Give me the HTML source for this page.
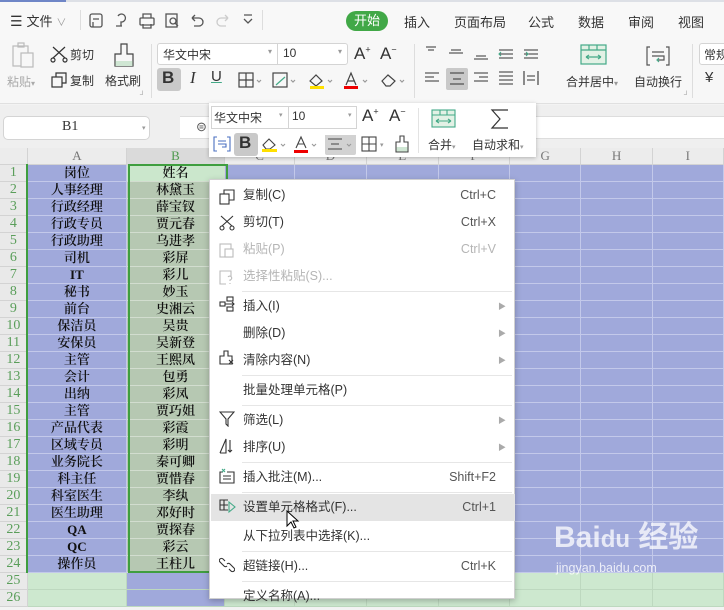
<!DOCTYPE html>
<html><head><meta charset="utf-8">
<style>
*{margin:0;padding:0;box-sizing:border-box}
body{width:724px;height:593px;overflow:hidden;position:relative;background:#f3f3f3;font-family:"Liberation Sans","Noto Sans CJK SC",sans-serif;font-size:12px;color:#333}
.a{position:absolute;white-space:nowrap}
.tab{position:absolute;top:12px;font-size:13px;color:#333}
.ic{position:absolute}
table{position:absolute;left:0;top:148px;border-collapse:separate;border-spacing:0;table-layout:fixed;font-family:"Liberation Serif","Noto Serif CJK SC",serif;font-size:13px}
td{padding:0;height:17px;border-right:1px solid #c3c9ea;border-bottom:1px solid #c3c9ea;background:#a0a9db;text-align:center;color:#111;line-height:16px;font-weight:600;overflow:hidden}
td.h{background:#e9e9e9;border-color:#d3d3d3;color:#5a9e5a;font-weight:normal;font-size:14px}
tr.hd td{height:16px;background:#ececec;border-color:#d3d3d3;color:#777;font-weight:normal;font-size:13px}
tr.hd td.sb{background:#dadada;color:#4e9a4e}
td.b{background:#b6c8b2;border-color:#d2ddcf}
td.b1{background:#cbe7cc}
tr.g td{background:#cde8cf;border-color:#bdd8bf}
tr.g td.h{background:#e9e9e9;border-color:#d3d3d3}
tr.g td.bb{background:#a0a9db}
.menu{position:absolute;left:209px;top:179px;width:306px;height:420px;background:#fff;border:1px solid #d0d0d0;box-shadow:0 2px 6px rgba(0,0,0,.25);font-size:12.5px}
.mi{position:absolute;left:0;width:304px;height:27px;line-height:27px}
.mi .t{position:absolute;left:33px;color:#333}
.mi .k{position:absolute;right:18px;color:#555}
.mi .r{position:absolute;right:8px;color:#aaa;font-size:8px}
.mi.dis .t,.mi.dis .k{color:#b5b5b5}
.sep{position:absolute;left:32px;width:270px;height:1px;background:#e6e6e6}
.box{position:absolute;background:#fff;border:1px solid #d4d4d4;border-radius:3px}
</style></head><body>
<div class="a" style="left:0;top:0;width:724px;height:2px;background:#dde0e6"></div>
<div class="a" style="left:0;top:0;width:66px;height:2px;background:#6f86c7"></div>
<div class="a" style="left:0;top:2px;width:724px;height:38px;background:#f8f8f8"></div>
<div class="a" style="left:10px;top:11px;font-size:14px">☰ <span style="font-size:13px">文件</span> <span style="color:#999;font-size:10px">∨</span></div>
<div class="a" style="left:80px;top:10px;width:1px;height:20px;background:#ddd"></div>
<svg class="ic" style="left:88px;top:12px" width="170" height="18" viewBox="0 0 170 18" fill="none" stroke="#555" stroke-width="1.3">
<rect x="2" y="2" width="12" height="13" rx="2"/><path d="M5 7h6M5 10v5"/>
<path d="M30 4a4 4 0 1 1 3 6v4M28 14h6"/>
<rect x="52" y="6" width="14" height="7" rx="1"/><path d="M55 6V2h8v4M55 12v4h8v-4"/>
<rect x="78" y="2" width="11" height="13"/><circle cx="85" cy="9" r="3"/><path d="M87 11l3 3"/>
<path d="M104 6h7a4 4 0 0 1 0 8h-5M104 6l3-3M104 6l3 3"/>
<path d="M140 6h-7a4 4 0 0 0 0 8h5M140 6l-3-3M140 6l-3 3" stroke="#ccc"/>
<path d="M156 7l4 4 4-4M156 3h8"/>
</svg>
<div class="a" style="left:262px;top:10px;width:1px;height:20px;background:#ddd"></div>
<div class="a" style="left:346px;top:11px;width:42px;height:20px;border-radius:10px;background:#41a847;color:#fff;font-size:13px;text-align:center;line-height:20px">开始</div>
<div class="tab" style="left:404px">插入</div>
<div class="tab" style="left:454px">页面布局</div>
<div class="tab" style="left:528px">公式</div>
<div class="tab" style="left:578px">数据</div>
<div class="tab" style="left:628px">审阅</div>
<div class="tab" style="left:678px">视图</div>
<div class="a" style="left:0;top:40px;width:724px;height:64px;background:#f7f7f7;border-bottom:1px solid #e0e0e0"></div>
<svg class="ic" style="left:10px;top:42px" width="26" height="28" viewBox="0 0 26 28" fill="none" stroke="#bbb" stroke-width="1.2"><rect x="3" y="4" width="15" height="20"/><rect x="8" y="1" width="6" height="4"/><rect x="11" y="11" width="12" height="14" fill="#f7f7f7"/></svg>
<div class="a" style="left:7px;top:73px;color:#aaa">粘贴<span style="font-size:8px">▾</span></div>
<svg class="ic" style="left:50px;top:45px" width="18" height="18" viewBox="0 0 18 18" fill="none" stroke="#333" stroke-width="1.2"><path d="M3 2l12 11M15 2L3 13"/><circle cx="3" cy="15" r="2"/><circle cx="15" cy="15" r="2"/></svg>
<div class="a" style="left:70px;top:46px">剪切</div>
<svg class="ic" style="left:50px;top:71px" width="18" height="18" viewBox="0 0 18 18" fill="none" stroke="#333" stroke-width="1.2"><rect x="2" y="6" width="10" height="10"/><path d="M6 6V2h10v10h-4"/></svg>
<div class="a" style="left:70px;top:72px">复制</div>
<svg class="ic" style="left:112px;top:42px" width="24" height="28" viewBox="0 0 24 28" fill="none" stroke="#444" stroke-width="1.2"><path d="M9 2h6v10h6v12H3V12h6z"/><rect x="3.5" y="19" width="17" height="5" fill="#cfe6d3" stroke="none"/></svg>
<div class="a" style="left:105px;top:72px">格式刷</div>
<div class="a" style="left:151px;top:44px;width:1px;height:54px;background:#ddd"></div>
<div class="box" style="left:157px;top:43px;width:121px;height:22px;border-radius:3px 0 0 3px"></div>
<div class="a" style="left:163px;top:46px">华文中宋</div><div class="a" style="left:268px;top:47px;color:#999;font-size:8px">▾</div>
<div class="box" style="left:277px;top:43px;width:71px;height:22px;border-radius:0 3px 3px 0"></div>
<div class="a" style="left:283px;top:46px">10</div><div class="a" style="left:338px;top:47px;color:#999;font-size:8px">▾</div>
<div class="a" style="left:354px;top:44px;font-size:17px">A<sup style="font-size:9px">+</sup></div>
<div class="a" style="left:380px;top:44px;font-size:17px">A<sup style="font-size:9px">−</sup></div>
<div class="a" style="left:157px;top:68px;width:24px;height:23px;background:#c9c9c9;border-radius:3px"></div>
<div class="a" style="left:162px;top:68px;font-size:17px;font-weight:bold">B</div>
<div class="a" style="left:190px;top:68px;font-size:17px;font-style:italic;font-family:'Liberation Serif',serif">I</div>
<div class="a" style="left:211px;top:68px;font-size:15px;text-decoration:underline;text-decoration-color:#4a8">U</div>
<svg class="ic" style="left:238px;top:71px" width="180" height="20" viewBox="0 0 180 20" fill="none" stroke="#444" stroke-width="1.2">
<rect x="1" y="2" width="14" height="14"/><path d="M8 2v14M1 9h14"/><path d="M19 9l2 2 2-2" stroke="#999"/>
<rect x="35" y="2" width="14" height="14"/><path d="M38 14l9-8" stroke="#4a8"/><path d="M53 9l2 2 2-2" stroke="#999"/>
<path d="M72 10l6-6 6 6-6 5z"/><rect x="72" y="15" width="14" height="3" fill="#ffe000" stroke="none"/><path d="M90 9l2 2 2-2" stroke="#999"/>
<path d="M108 14l5-12 5 12M110 10h6"/><rect x="106" y="15" width="14" height="3" fill="#e00" stroke="none"/><path d="M125 9l2 2 2-2" stroke="#999"/>
<path d="M144 10l6-6 7 6-5 5h-4z"/><path d="M162 9l2 2 2-2" stroke="#999"/>
</svg>
<div class="a" style="left:414px;top:44px;width:1px;height:54px;background:#ddd"></div>
<svg class="ic" style="left:424px;top:44px" width="125" height="48" viewBox="0 0 125 48" fill="none" stroke="#333" stroke-width="1.1">
<path d="M2 3h10M4 6h6"/><path d="M27 6h10M25 9h14"/><path d="M52 12h10M50 15h14"/>
<path d="M75 6h14M75 10h14M75 14h14M78 10h-3"/><path d="M77 8l-2 2 2 2" stroke="#4a8"/>
<path d="M100 6h14M100 10h14M100 14h14"/><path d="M102 8l2 2-2 2" stroke="#4a8"/>
<path d="M1 29h14M1 33h9M1 37h14"/>
<rect x="22" y="24" width="22" height="22" rx="2" fill="#c9c9c9" stroke="none"/><path d="M26 29h14M29 35h8M26 40h14"/>
<path d="M50 29h14M55 33h9M50 37h14"/><path d="M75 28h14M75 32h14M75 36h14M75 40h14"/>
<path d="M100 27v14M114 27v14M103 32h8M103 36h8"/>
</svg>
<svg class="ic" style="left:580px;top:44px" width="28" height="22" viewBox="0 0 28 22" fill="none" stroke="#4a8" stroke-width="1.2"><rect x="1" y="1" width="25" height="19" fill="#e2f1e5"/><path d="M1 6h25M9 1v5M17 1v5"/><path d="M6 13h15M6 13l3-2M6 13l3 2M21 13l-3-2M21 13l-3 2"/></svg>
<div class="a" style="left:566px;top:73px">合并居中<span style="font-size:8px;color:#999">▾</span></div>
<svg class="ic" style="left:646px;top:45px" width="24" height="22" viewBox="0 0 24 22" fill="none" stroke="#555" stroke-width="1.2"><path d="M4 2H1v18h3M20 2h3v18h-3M6 7h12M6 11h12v4h-6" /><path d="M13 13l-2 2 2 2" stroke="#4a8"/></svg>
<div class="a" style="left:634px;top:73px">自动换行</div>
<div class="a" style="left:692px;top:44px;width:1px;height:54px;background:#ddd"></div>
<div class="box" style="left:699px;top:43px;width:40px;height:22px"></div>
<div class="a" style="left:704px;top:46px">常规</div>
<div class="a" style="left:705px;top:69px;font-size:15px">¥</div>
<div class="a" style="left:140px;top:92px;font-size:7px;color:#999">┘</div>
<div class="a" style="left:684px;top:92px;font-size:7px;color:#999">┘</div>
<div class="a" style="left:0;top:105px;width:724px;height:43px;background:#efefef"></div>
<div class="a" style="left:180px;top:116px;width:544px;height:23px;background:#fff;border-top:1px solid #ddd;border-bottom:1px solid #ddd"></div>
<div class="box" style="left:3px;top:116px;width:147px;height:24px;border-radius:5px"></div>
<div class="a" style="left:62px;top:119px;font-family:'Liberation Serif',serif;font-size:14px">B1</div>
<div class="a" style="left:142px;top:124px;color:#999;font-size:7px">▾</div>
<div class="a" style="left:196px;top:119px;font-size:13px;color:#555">⊜</div>
<table>
<colgroup><col style="width:28px"><col style="width:100px"><col style="width:99px"><col style="width:71px"><col style="width:72px"><col style="width:73px"><col style="width:72px"><col style="width:72px"><col style="width:72px"><col style="width:72px"></colgroup>
<tr class="hd"><td></td><td>A</td><td class="sb">B</td><td>C</td><td>D</td><td>E</td><td>F</td><td>G</td><td>H</td><td>I</td></tr>
<tr><td class="h">1</td><td>岗位</td><td class="b b1">姓名</td><td></td><td></td><td></td><td></td><td></td><td></td><td></td></tr>
<tr><td class="h">2</td><td>人事经理</td><td class="b">林黛玉</td><td></td><td></td><td></td><td></td><td></td><td></td><td></td></tr>
<tr><td class="h">3</td><td>行政经理</td><td class="b">薛宝钗</td><td></td><td></td><td></td><td></td><td></td><td></td><td></td></tr>
<tr><td class="h">4</td><td>行政专员</td><td class="b">贾元春</td><td></td><td></td><td></td><td></td><td></td><td></td><td></td></tr>
<tr><td class="h">5</td><td>行政助理</td><td class="b">乌进孝</td><td></td><td></td><td></td><td></td><td></td><td></td><td></td></tr>
<tr><td class="h">6</td><td>司机</td><td class="b">彩屏</td><td></td><td></td><td></td><td></td><td></td><td></td><td></td></tr>
<tr><td class="h">7</td><td>IT</td><td class="b">彩儿</td><td></td><td></td><td></td><td></td><td></td><td></td><td></td></tr>
<tr><td class="h">8</td><td>秘书</td><td class="b">妙玉</td><td></td><td></td><td></td><td></td><td></td><td></td><td></td></tr>
<tr><td class="h">9</td><td>前台</td><td class="b">史湘云</td><td></td><td></td><td></td><td></td><td></td><td></td><td></td></tr>
<tr><td class="h">10</td><td>保洁员</td><td class="b">吴贵</td><td></td><td></td><td></td><td></td><td></td><td></td><td></td></tr>
<tr><td class="h">11</td><td>安保员</td><td class="b">吴新登</td><td></td><td></td><td></td><td></td><td></td><td></td><td></td></tr>
<tr><td class="h">12</td><td>主管</td><td class="b">王熙凤</td><td></td><td></td><td></td><td></td><td></td><td></td><td></td></tr>
<tr><td class="h">13</td><td>会计</td><td class="b">包勇</td><td></td><td></td><td></td><td></td><td></td><td></td><td></td></tr>
<tr><td class="h">14</td><td>出纳</td><td class="b">彩凤</td><td></td><td></td><td></td><td></td><td></td><td></td><td></td></tr>
<tr><td class="h">15</td><td>主管</td><td class="b">贾巧姐</td><td></td><td></td><td></td><td></td><td></td><td></td><td></td></tr>
<tr><td class="h">16</td><td>产品代表</td><td class="b">彩霞</td><td></td><td></td><td></td><td></td><td></td><td></td><td></td></tr>
<tr><td class="h">17</td><td>区域专员</td><td class="b">彩明</td><td></td><td></td><td></td><td></td><td></td><td></td><td></td></tr>
<tr><td class="h">18</td><td>业务院长</td><td class="b">秦可卿</td><td></td><td></td><td></td><td></td><td></td><td></td><td></td></tr>
<tr><td class="h">19</td><td>科主任</td><td class="b">贾惜春</td><td></td><td></td><td></td><td></td><td></td><td></td><td></td></tr>
<tr><td class="h">20</td><td>科室医生</td><td class="b">李纨</td><td></td><td></td><td></td><td></td><td></td><td></td><td></td></tr>
<tr><td class="h">21</td><td>医生助理</td><td class="b">邓好时</td><td></td><td></td><td></td><td></td><td></td><td></td><td></td></tr>
<tr><td class="h">22</td><td>QA</td><td class="b">贾探春</td><td></td><td></td><td></td><td></td><td></td><td></td><td></td></tr>
<tr><td class="h">23</td><td>QC</td><td class="b">彩云</td><td></td><td></td><td></td><td></td><td></td><td></td><td></td></tr>
<tr><td class="h">24</td><td>操作员</td><td class="b">王柱儿</td><td></td><td></td><td></td><td></td><td></td><td></td><td></td></tr>
<tr class="g"><td class="h">25</td><td></td><td class="bb"></td><td></td><td></td><td></td><td></td><td></td><td></td><td></td></tr>
<tr class="g"><td class="h">26</td><td></td><td class="bb"></td><td></td><td></td><td></td><td></td><td></td><td></td><td></td></tr>
</table>
<div class="a" style="left:26px;top:164px;width:2px;height:409px;background:#3f9e3f"></div>
<div class="a" style="left:128px;top:164px;width:100px;height:409px;border:2px solid #3f9e3f"></div>
<div class="a" style="left:554px;top:512px;font-size:30px;font-weight:bold;color:rgba(255,255,255,.75)">Bai<span style="font-size:24px">du</span> 经验</div>
<div class="a" style="left:556px;top:561px;font-size:12.5px;color:rgba(255,255,255,.8)">jingyan.baidu.com</div>
<div class="a" style="left:209px;top:103px;width:327px;height:54px;background:#fff;box-shadow:0 1px 4px rgba(0,0,0,.25)"></div>
<div class="box" style="left:211px;top:106px;width:78px;height:23px;border-radius:0"></div>
<div class="a" style="left:214px;top:109px">华文中宋</div><div class="a" style="left:279px;top:111px;color:#999;font-size:7px">▾</div>
<div class="box" style="left:288px;top:106px;width:69px;height:23px;border-radius:0"></div>
<div class="a" style="left:292px;top:109px">10</div><div class="a" style="left:348px;top:111px;color:#999;font-size:7px">▾</div>
<div class="a" style="left:362px;top:106px;font-size:17px">A<sup style="font-size:9px">+</sup></div>
<div class="a" style="left:389px;top:106px;font-size:17px">A<sup style="font-size:9px">−</sup></div>
<div class="a" style="left:418px;top:108px;width:1px;height:45px;background:#e3e3e3"></div>
<svg class="ic" style="left:431px;top:109px" width="26" height="20" viewBox="0 0 26 20" fill="none" stroke="#4a8" stroke-width="1.1"><rect x="1" y="1" width="23" height="17" fill="#e2f1e5"/><path d="M1 6h23M9 1v5M16 1v5M5 12h15M5 12l3-2M5 12l3 2M20 12l-3-2M20 12l-3 2"/></svg>
<svg class="ic" style="left:489px;top:108px" width="22" height="22" viewBox="0 0 22 22" fill="none" stroke="#333" stroke-width="1.2"><path d="M19 2H3l8 9-8 9h16"/></svg>
<svg class="ic" style="left:213px;top:136px" width="18" height="16" viewBox="0 0 18 16" fill="none" stroke="#4a6fc0" stroke-width="1.1"><path d="M4 1H1v14h3M14 1h3v14h-3M5 5h8M5 8h8v3h-4"/></svg>
<div class="a" style="left:234px;top:133px;width:24px;height:23px;background:#c9c9c9;border-radius:3px"></div>
<div class="a" style="left:239px;top:133px;font-size:17px;font-weight:bold">B</div>
<svg class="ic" style="left:261px;top:135px" width="120" height="20" viewBox="0 0 120 20" fill="none" stroke="#444" stroke-width="1.1">
<path d="M2 10l6-6 6 6-5 4h-4z"/><rect x="1" y="14" width="15" height="3" fill="#ffe000" stroke="none"/><path d="M20 9l2 2 2-2" stroke="#999"/>
<path d="M35 13l5-11 5 11M37 9h6"/><rect x="33" y="15" width="14" height="3" fill="#e00" stroke="none"/><path d="M51 9l2 2 2-2" stroke="#999"/>
<rect x="64" y="-2" width="31" height="22" rx="2" fill="#d2d2d2" stroke="none"/><path d="M67 4h14M70 9h8M67 14h14"/><path d="M86 9l2 2 2-2" stroke="#999"/>
<rect x="101" y="2" width="14" height="14"/><path d="M108 2v14M101 9h14"/>
</svg>
<div class="a" style="left:380px;top:141px;color:#999;font-size:7px">▾</div>
<svg class="ic" style="left:394px;top:134px" width="16" height="20" viewBox="0 0 16 20" fill="none" stroke="#444" stroke-width="1.1"><path d="M6 2h4v6h4v10H2V8h4z"/><rect x="2.5" y="13" width="11" height="4.5" fill="#cfe6d3" stroke="none"/></svg>
<div class="a" style="left:428px;top:136px">合并<span style="font-size:7px;color:#999">▾</span></div>
<div class="a" style="left:472px;top:136px">自动求和<span style="font-size:7px;color:#999">▾</span></div>
<div class="menu">
<svg class="ic" style="left:9px;top:9px" width="16" height="16" viewBox="0 0 16 16" fill="none" stroke="#333" stroke-width="1.1"><rect x="1" y="5" width="9" height="10"/><path d="M5 5V1h10v10h-5"/></svg>
<div class="mi" style="top:2px"><span class="t">复制(C)</span><span class="k">Ctrl+C</span></div>
<svg class="ic" style="left:9px;top:35px" width="16" height="16" viewBox="0 0 16 16" fill="none" stroke="#333" stroke-width="1.1"><path d="M2 1l11 10M14 1L3 11"/><circle cx="3" cy="13" r="2"/><circle cx="13" cy="13" r="2"/></svg>
<div class="mi" style="top:29px"><span class="t">剪切(T)</span><span class="k">Ctrl+X</span></div>
<svg class="ic" style="left:9px;top:62px" width="16" height="16" viewBox="0 0 16 16" fill="none" stroke="#bbb" stroke-width="1.1"><rect x="1" y="2" width="11" height="13"/><rect x="6" y="7" width="8" height="8" fill="#fff"/></svg>
<div class="mi dis" style="top:56px"><span class="t">粘贴(P)</span><span class="k">Ctrl+V</span></div>
<svg class="ic" style="left:9px;top:89px" width="16" height="16" viewBox="0 0 16 16" fill="none" stroke="#bbb" stroke-width="1.1"><path d="M12 7V2H1v13h6"/><path d="M9 8a2 2 0 1 1 2 3v1M11 14v1"/></svg>
<div class="mi dis" style="top:83px"><span class="t">选择性粘贴(S)...</span></div>
<div class="sep" style="top:111px"></div>
<svg class="ic" style="left:9px;top:116px" width="16" height="16" viewBox="0 0 16 16" fill="none" stroke="#333" stroke-width="1.1"><rect x="1" y="6" width="5" height="4"/><rect x="8" y="1" width="6" height="4"/><rect x="8" y="11" width="6" height="4"/><path d="M6 8h9M13 6l2 2-2 2"/></svg>
<div class="mi" style="top:113px"><span class="t">插入(I)</span><span class="r">▶</span></div>
<div class="mi" style="top:140px"><span class="t">删除(D)</span><span class="r">▶</span></div>
<svg class="ic" style="left:9px;top:170px" width="16" height="16" viewBox="0 0 16 16" fill="none" stroke="#333" stroke-width="1.1"><path d="M5 1h4v5h4v8H1V6h4z"/><path d="M10 10l4 4M14 10l-4 4"/></svg>
<div class="mi" style="top:167px"><span class="t">清除内容(N)</span><span class="r">▶</span></div>
<div class="sep" style="top:195px"></div>
<div class="mi" style="top:197px"><span class="t">批量处理单元格(P)</span></div>
<div class="sep" style="top:225px"></div>
<svg class="ic" style="left:9px;top:231px" width="16" height="16" viewBox="0 0 16 16" fill="none" stroke="#333" stroke-width="1.1"><path d="M1 1h14L9 8v7l-2-2V8z"/></svg>
<div class="mi" style="top:227px"><span class="t">筛选(L)</span><span class="r">▶</span></div>
<svg class="ic" style="left:9px;top:258px" width="16" height="16" viewBox="0 0 16 16" fill="none" stroke="#333" stroke-width="1.1"><path d="M1 15L7 1v14H1M11 2v12M9 12l2 2 2-2"/></svg>
<div class="mi" style="top:254px"><span class="t">排序(U)</span><span class="r">▶</span></div>
<div class="sep" style="top:282px"></div>
<svg class="ic" style="left:9px;top:288px" width="16" height="16" viewBox="0 0 16 16" fill="none" stroke="#333" stroke-width="1.1"><path d="M4 4H1v11h14V4H8M4 8h8M4 11h8"/><path d="M3 1l3 3M6 1L3 4" stroke="#4a8"/></svg>
<div class="mi" style="top:284px"><span class="t">插入批注(M)...</span><span class="k">Shift+F2</span></div>
<div class="sep" style="top:312px"></div>
<div class="mi" style="top:314px;left:1px;background:#e4e4e4"></div>
<svg class="ic" style="left:9px;top:318px" width="18" height="16" viewBox="0 0 18 16" fill="none" stroke="#333" stroke-width="1.1"><path d="M9 2H1v10h8M1 7h8M5 2v10"/><path d="M10 4l6 5-6 5z" stroke="#4a8"/></svg>
<div class="mi" style="top:314px"><span class="t">设置单元格格式(F)...</span><span class="k">Ctrl+1</span></div>
<svg class="ic" style="left:76px;top:330px" width="14" height="20" viewBox="0 0 14 20"><path d="M1 1v15l4-4 3 6 2-1-3-6h5z" fill="#fff" stroke="#000" stroke-width="1"/></svg>
<div class="mi" style="top:343px"><span class="t">从下拉列表中选择(K)...</span></div>
<div class="sep" style="top:371px"></div>
<svg class="ic" style="left:9px;top:377px" width="16" height="16" viewBox="0 0 16 16" fill="none" stroke="#333" stroke-width="1.1"><path d="M6 4L4 2a2 2 0 0 0-3 3l4 4a2 2 0 0 0 3 0M10 12l2 2a2 2 0 0 0 3-3l-4-4a2 2 0 0 0-3 0"/></svg>
<div class="mi" style="top:373px"><span class="t">超链接(H)...</span><span class="k">Ctrl+K</span></div>
<div class="sep" style="top:401px"></div>
<div class="mi" style="top:403px"><span class="t">定义名称(A)...</span></div>
</div>
</body></html>
